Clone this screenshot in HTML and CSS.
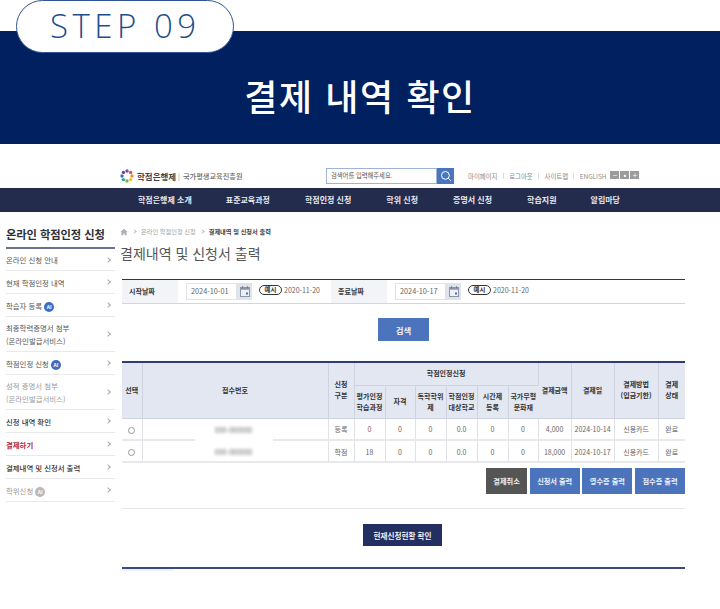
FILE: index.html
```html
<!DOCTYPE html>
<html lang="ko">
<head>
<meta charset="utf-8">
<title>결제 내역 확인</title>
<link rel="stylesheet" href="styles.css">
</head>
<body>
<section class="hero">
  <div class="pill">STEP 09</div>
  <h1 class="hero-title">결제 내역 확인</h1>
</section>
<header class="top">
  <div class="logo">
    <svg class="logo-mark" width="14" height="14" viewBox="0 0 14 14">
      <circle cx="7" cy="2" r="1.7" fill="#8e44ad"/><circle cx="10.6" cy="3.4" r="1.7" fill="#d9534f"/>
      <circle cx="12" cy="7" r="1.7" fill="#ef8a2c"/><circle cx="10.6" cy="10.6" r="1.7" fill="#f2c029"/>
      <circle cx="7" cy="12" r="1.7" fill="#7cb342"/><circle cx="3.4" cy="10.6" r="1.7" fill="#26a69a"/>
      <circle cx="2" cy="7" r="1.7" fill="#3f6fc4"/><circle cx="3.4" cy="3.4" r="1.7" fill="#5e4aa8"/>
    </svg>
    <b class="logo-main">학점은행제</b><span class="logo-bar">|</span><span class="logo-sub">국가평생교육진흥원</span>
  </div>
  <div class="search">
    <span class="search-box">검색어를 입력해주세요.</span>
    <span class="search-btn"><svg width="12" height="12" viewBox="0 0 12 12" fill="none" stroke="#fff" stroke-width="1"><circle cx="5.4" cy="5.4" r="3.9"/><path d="M8.3 8.3l2.6 2.6"/></svg></span>
  </div>
  <nav class="util">
    <span>마이페이지</span><i></i><span>로그아웃</span><i></i><span>사이트맵</span><i></i><span>ENGLISH</span>
  </nav>
  <div class="zoom"><span>−</span><span>•</span><span>+</span></div>
</header>
<nav class="gnb">
  <span class="g1">학점은행제 소개</span><span class="g2">표준교육과정</span><span class="g3">학점인정 신청</span><span class="g4">학위 신청</span><span class="g5">증명서 신청</span><span class="g6">학습지원</span><span class="g7">알림마당</span>
</nav>
<div class="content">
  <aside class="side">
    <h2 class="side-title">온라인 학점인정 신청</h2>
    <ul class="side-list">
      <li class="row1 first"><span>온라인 신청 안내</span><em></em></li>
      <li class="row1"><span>현재 학점인정 내역</span><em></em></li>
      <li class="row1"><span>학습자 등록 <b class="ai">AI</b></span><em></em></li>
      <li class="row2"><span>최종학력증명서 첨부<br>(온라인발급서비스)</span><em></em></li>
      <li class="row1"><span>학점인정 신청 <b class="ai">AI</b></span><em></em></li>
      <li class="row2 mute"><span>성적 증명서 첨부<br>(온라인발급서비스)</span><em></em></li>
      <li class="row1 dark"><span>신청 내역 확인</span><em></em></li>
      <li class="row1 active"><span>결제하기</span><em></em></li>
      <li class="row1 dark"><span>결제내역 및 신청서 출력</span><em></em></li>
      <li class="row1 mute"><span>학위신청 <b class="ai off">AI</b></span><em></em></li>
    </ul>
  </aside>
  <main class="main">
    <div class="crumb">
      <svg width="8" height="8" viewBox="0 0 8 8"><path d="M4 .8L.4 4h1v3.2h2V5.2h1.2v2h2V4h1z" fill="#a9adb5"/></svg>
      <u></u><span>온라인 학점인정 신청</span><u></u><b>결제내역 및 신청서 출력</b>
    </div>
    <h2 class="page-title">결제내역 및 신청서 출력</h2>
    <div class="filter">
      <div class="lbl">시작날짜</div>
      <div class="field">
        <span class="date">2024-10-01</span>
        <span class="cal"><svg width="10" height="11" viewBox="0 0 10 11"><rect x=".5" y="1.5" width="9" height="9" fill="#eef0f5" stroke="#8d96a8"/><rect x=".5" y="1.5" width="9" height="2.2" fill="#8d96a8"/><path d="M2.5 .3v2M7.5 .3v2" stroke="#6c7588"/><rect x="6" y="6.5" width="2" height="2" fill="#3f6fc4"/></svg></span>
        <span class="eg">예시</span><span class="egd">2020-11-20</span>
      </div>
      <div class="lbl lbl2">종료날짜</div>
      <div class="field">
        <span class="date">2024-10-17</span>
        <span class="cal"><svg width="10" height="11" viewBox="0 0 10 11"><rect x=".5" y="1.5" width="9" height="9" fill="#eef0f5" stroke="#8d96a8"/><rect x=".5" y="1.5" width="9" height="2.2" fill="#8d96a8"/><path d="M2.5 .3v2M7.5 .3v2" stroke="#6c7588"/><rect x="6" y="6.5" width="2" height="2" fill="#3f6fc4"/></svg></span>
        <span class="eg">예시</span><span class="egd">2020-11-20</span>
      </div>
    </div>
    <div class="search-row"><button class="btn blue big">검색</button></div>
    <table class="grid">
      <colgroup>
        <col class="c20"><col class="c186"><col class="c26"><col class="c31"><col class="c30"><col class="c31"><col class="c31"><col class="c31"><col class="c30"><col class="c33"><col class="c43"><col class="c44"><col>
      </colgroup>
      <thead>
        <tr class="h1">
          <th rowspan="2">선택</th><th rowspan="2">접수번호</th><th rowspan="2">신청<br>구분</th><th colspan="6">학점인정신청</th><th rowspan="2">결제금액</th><th rowspan="2">결제일</th><th rowspan="2">결제방법<br>(입금기한)</th><th rowspan="2">결제<br>상태</th>
        </tr>
        <tr class="h2">
          <th>평가인정<br>학습과정</th><th>자격</th><th>독학학위<br>제</th><th>학점인정<br>대상학교</th><th>시간제<br>등록</th><th>국가무형<br>문화재</th>
        </tr>
      </thead>
      <tbody>
        <tr>
          <td><span class="radio"></span></td><td class="num"><span class="mask"><span class="blur">000-000000</span></span></td><td>등록</td><td class="red">0</td><td>0</td><td>0</td><td>0.0</td><td>0</td><td>0</td><td>4,000</td><td>2024-10-14</td><td>신용카드</td><td>완료</td>
        </tr>
        <tr>
          <td><span class="radio"></span></td><td class="num"><span class="mask"><span class="blur">000-000000</span></span></td><td>학점</td><td>18</td><td>0</td><td>0</td><td>0.0</td><td>0</td><td>0</td><td>18,000</td><td>2024-10-17</td><td>신용카드</td><td>완료</td>
        </tr>
      </tbody>
    </table>
    <div class="actions">
      <button class="btn gray">결제취소</button><button class="btn blue">신청서 출력</button><button class="btn blue">영수증 출력</button><button class="btn blue">접수증 출력</button>
    </div>
    <div class="confirm"><button class="btn navy">현재신청현황 확인</button></div>
    <div class="end"><span></span></div>
  </main>
</div>
</body>
</html>
```
FILE: styles.css
```css
* { box-sizing: border-box; }
html, body { margin: 0; padding: 0; }
body {
  width: 720px; height: 609px; overflow: hidden; background: #fff; color: #444;
  font-family: "Noto Sans CJK KR", "Noto Sans", sans-serif;
}
h1, h2, ul { margin: 0; padding: 0; }
li { list-style: none; }

.hero { position: relative; height: 144px; padding-top: 31px; }
.hero-title {
  height: 113px; background: #002060; color: #fff; text-align: center;
  font-size: 36px; font-weight: 500; line-height: 128px; letter-spacing: 1.6px;
}
.pill {
  position: absolute; left: 16px; top: 0; width: 218px; height: 53px;
  background: #fff; border: 1px solid #2f5597; border-radius: 27px;
  color: #1f4e8c; font: 300 33px/50px "Open Sans", sans-serif; letter-spacing: 4.5px;
  padding-left: 33px; white-space: nowrap;
}

.top { display: flex; align-items: center; height: 44px; padding: 24px 0 4px 120px; font-size: 7px; }
.logo { display: flex; align-items: center; width: 206px; color: #555; }
.logo-mark { margin-right: 3px; flex: none; }
.logo-main { font-size: 8.5px; font-weight: 700; color: #444; }
.logo-bar { margin: 0 3px 0 2px; color: #888; font-size: 7px; }
.logo-sub { font-size: 7.2px; font-weight: 500; color: #666; }
.search { display: flex; width: 128px; height: 16px; }
.search-box { flex: 1; border: 1px solid #9fb3da; color: #555; font-size: 6.3px; line-height: 14px; padding-left: 4px; }
.search-btn { width: 17px; background: #4a76c0; display: flex; align-items: center; justify-content: center; }
.util { display: flex; align-items: center; margin-left: 14px; color: #8a8a8a; font-size: 6.4px; gap: 5.4px; white-space: nowrap; }
.util i { width: 1px; height: 6px; background: #ddd; }
.zoom { display: flex; gap: 1px; margin-left: 4px; margin-top: -3px; }
.zoom span { width: 9px; height: 8px; background: #9b9b9b; color: #fff; font-size: 8px; line-height: 8px; text-align: center; }

.gnb { position: relative; display: flex; height: 24px; background: #232c4d; color: #e8eaf0; font-size: 8px; font-weight: 700; line-height: 24px; padding-left: 138px; white-space: nowrap; }
.gnb span { display: block; }
.gnb .g2 { margin-left: 34px; }
.gnb .g3 { margin-left: 35px; }
.gnb .g4 { margin-left: 35px; }
.gnb .g5 { margin-left: 35px; }
.gnb .g6 { margin-left: 35px; }
.gnb .g7 { margin-left: 34px; }

.content { display: flex; align-items: flex-start; }
.side { width: 109px; margin-left: 6px; flex: none; }
.side-title { height: 37px; padding-top: 13px; border-bottom: 2px solid #6b7191; font-size: 11.3px; font-weight: 700; line-height: 19px; color: #2b2f3a; white-space: nowrap; letter-spacing: -.1px; }
.side-list li { display: flex; align-items: center; justify-content: space-between; border-bottom: 1px solid #e9e9ec; font-size: 7.4px; line-height: 13px; color: #555; }
.side-list .row1 { height: 23px; }
.side-list .first { height: 22px; }
.side-list .row2 { height: 35px; }
.side-list .dark { color: #333; font-weight: 500; }
.side-list .active { color: #b3233f; font-weight: 700; }
.side-list .mute { color: #9a9a9a; }
.side-list em { width: 4px; height: 4px; border: solid #aaa; border-width: 1px 1px 0 0; transform: rotate(45deg); margin-right: 5px; flex: none; }
.ai { display: inline-block; width: 10px; height: 10px; border-radius: 50%; background: #3f6cbf; color: #fff; font-size: 5px; font-weight: 700; line-height: 10px; text-align: center; vertical-align: 0; }
.ai.off { background: #b9b9b9; }

.main { width: 565px; margin-left: 5px; flex: none; }
.crumb { display: flex; align-items: center; height: 13px; margin-top: 13px; gap: 5px; font-size: 6.2px; color: #a0a0a0; white-space: nowrap; }
.crumb u { width: 3px; height: 3px; border: solid #bbb; border-width: 1px 1px 0 0; transform: rotate(45deg); }
.crumb b { color: #444; font-weight: 700; }
.page-title { margin-top: 4px; height: 37px; font-size: 14px; font-weight: 400; line-height: 22px; color: #555; white-space: nowrap; }

.filter { display: flex; align-items: center; height: 25px; margin-left: 2px; border-top: 1px solid #2b3463; border-bottom: 1px solid #d3d5de; }
.lbl { width: 56px; height: 100%; background: #f3f4f8; color: #333; font-size: 7px; font-weight: 700; line-height: 23px; padding-left: 7px; }
.lbl2 { width: 56px; }
.field { display: flex; align-items: center; padding-left: 8px; width: 154px; }
.field:nth-child(2) { width: 153px; }
.date { width: 51px; height: 17px; border: 1px solid #e0e2ea; color: #666; font-size: 7.3px; line-height: 15px; padding-left: 4px; }
.cal { display: flex; align-items: center; justify-content: center; width: 15px; height: 17px; background: #dfe3ec; }
.eg { width: 23px; height: 10px; margin: -4px 2px 0 7px; border: 1px solid #333; border-radius: 6px; color: #333; font-size: 6.4px; font-weight: 700; line-height: 8px; text-align: center; }
.egd { margin-top: -4px; color: #666; font-size: 7px; white-space: nowrap; }

.search-row { display: flex; justify-content: center; margin: 14px 0 20px 2px; }
.btn { border: 0; padding: 0; color: #eef1f8; font: 700 7.2px "Noto Sans CJK KR", sans-serif; height: 26px; white-space: nowrap; }
.btn.big { width: 51px; height: 23px; font-size: 8.4px; }
.blue { background: #4b74bd; }
.gray { background: #555; }
.btn.navy { background: #232f60; width: 79px; height: 22px; font-size: 7.6px; }

.grid { width: 563px; margin-left: 2px; border-collapse: collapse; table-layout: fixed; border-top: 2px solid #2f3d75; font-size: 7px; }
.c20 { width: 20px; } .c186 { width: 186px; } .c26 { width: 26px; } .c30 { width: 30px; } .c31 { width: 31px; } .c33 { width: 33px; } .c43 { width: 43px; } .c44 { width: 44px; }
.grid th { background: #e3e7f1; color: #333; font-weight: 700; line-height: 11px; padding: 0; border-right: 1px solid #cfd3df; border-bottom: 1px solid #cfd3df; font-size: 7px; }
.grid th:last-child, .grid td:last-child { border-right: 0; }
.grid .h1 { height: 23px; }
.grid .h2 { height: 33px; }
.grid td { height: 22px; padding: 1px 0 0; text-align: center; color: #666; border-right: 1px solid #e0e2e8; border-bottom: 2px solid #e9e9ec; }
.grid td.num { position: relative; }
.grid td.red { color: #8f5a4a; }
.radio { display: inline-block; width: 7px; height: 7px; border: 1px solid #999; border-radius: 50%; vertical-align: middle; }
.mask { position: absolute; left: 52px; top: 0; width: 78px; height: 23px; background: #fff; line-height: 23px; }
.grid tr:last-child .mask { height: 20px; }
.blur { color: #666; filter: blur(1.4px); font-size: 7px; }

.actions { display: flex; justify-content: flex-end; gap: 2.67px; margin: 5px 0 0 2px; height: 41px; padding-bottom: 15px; border-bottom: 1px solid #e6e6e8; }
.actions .btn { height: 26px; width: 50px; }
.actions .gray { width: 41px; }
.confirm { display: flex; justify-content: center; padding: 15px 0 21px; }
.end { position: relative; height: 2px; margin-left: 2px; background: #3b4a80; }
.end span { position: absolute; left: 0; top: 2px; width: 51px; height: 2px; background: #eef1f8; }
```
